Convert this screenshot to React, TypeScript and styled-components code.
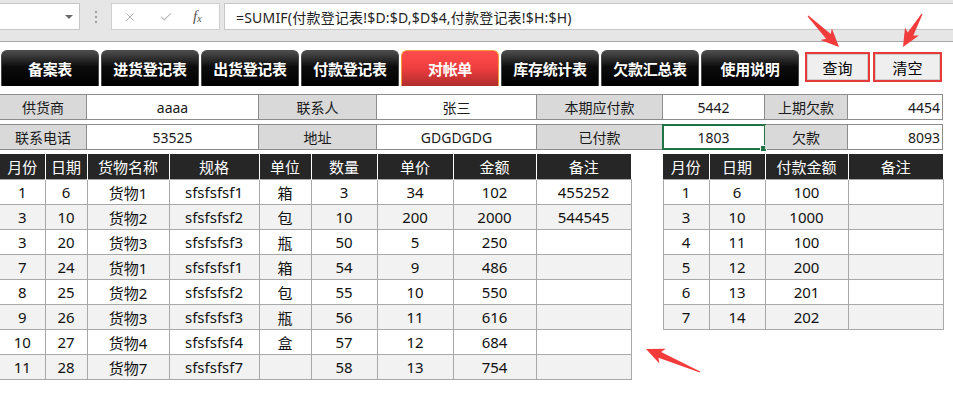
import React from "react";
import styled, { createGlobalStyle, css } from "styled-components";
import { X, Check } from "lucide-react";

const GlobalStyle = createGlobalStyle`
  html, body {
    margin: 0;
    padding: 0;
    background: #fff;
  }
  body {
    font-family: "Noto Sans", "Noto Sans CJK SC", sans-serif;
    color: #111;
  }
`;

const Page = styled.div`
  position: relative;
  width: 953px;
  height: 393px;
  overflow: hidden;
  background: #fff;
`;

/* ---------- formula bar ---------- */

const FormulaBar = styled.div`
  display: flex;
  align-items: flex-start;
  height: 42px;
  box-sizing: border-box;
  padding-top: 3px;
  background: #e6e6e6;
  border-bottom: 1px solid #a8a8a8;
`;

const NameBox = styled.div`
  position: relative;
  width: 83px;
  height: 27px;
  margin-left: -3px;
  box-sizing: border-box;
  background: #fff;
  border: 1px solid #c6c6c6;
  &::after {
    content: "";
    position: absolute;
    right: 6px;
    top: 11px;
    border-left: 4px solid transparent;
    border-right: 4px solid transparent;
    border-top: 4px solid #6a6a6a;
  }
`;

const Grip = styled.div`
  width: 31px;
  height: 27px;
  display: flex;
  align-items: center;
  justify-content: center;
`;

const FxGroup = styled.div`
  display: flex;
  align-items: center;
  width: 109px;
  height: 27px;
  box-sizing: border-box;
  background: #fff;
  border: 1px solid #d0d0d0;
  padding-left: 11px;
  gap: 22px;
  color: #b0b0b0;
`;

const FxLabel = styled.span`
  font-family: "Liberation Serif", serif;
  font-style: italic;
  font-size: 15px;
  color: #555;
  margin-left: -2px;
  sub {
    font-size: 10px;
    vertical-align: -1px;
  }
`;

const FormulaInput = styled.div`
  flex: 1;
  height: 27px;
  margin-left: 4px;
  margin-right: -4px;
  box-sizing: border-box;
  background: #fff;
  border: 1px solid #c6c6c6;
  padding-left: 11px;
  display: flex;
  align-items: center;
  font-size: 14px;
  letter-spacing: 0.2px;
  color: #222;
  white-space: nowrap;
`;

/* ---------- sheet tabs ---------- */

const TabRow = styled.div`
  display: flex;
  align-items: flex-start;
  height: 52px;
  box-sizing: border-box;
  padding: 8px 0 0 1px;
  gap: 2px;
`;

const Tab = styled.div<{ $active?: boolean }>`
  width: 98px;
  height: 36px;
  box-sizing: border-box;
  display: flex;
  align-items: center;
  justify-content: center;
  border-radius: 6px 6px 0 0;
  border: 1px solid ${(p) => (p.$active ? "#f59a3a" : "#4a4a4a")};
  border-bottom: none;
  background: ${(p) =>
    p.$active
      ? "linear-gradient(#ff4c4c 0%, #f23f3f 45%, #b02c2c 100%)"
      : "linear-gradient(#4d4d4d 0%, #0c0c0c 45%, #000 100%)"};
  color: #fff;
  font-family: "Noto Sans CJK SC", sans-serif;
  font-weight: 700;
  font-size: 15px;
  letter-spacing: -0.3px;
`;

const ActionGroup = styled.div`
  display: flex;
  gap: 3px;
  margin-left: 4px;
  margin-top: 2px;
`;

const ActionButton = styled.div<{ $w: number }>`
  width: ${(p) => p.$w}px;
  height: 30px;
  box-sizing: border-box;
  display: flex;
  align-items: center;
  justify-content: center;
  border: 2px solid #e63b3b;
  background: #efefef;
  box-shadow: inset 0 0 0 1px #cfcfcf;
  font-family: "Noto Sans CJK SC", sans-serif;
  font-size: 15px;
  color: #000;
`;

/* ---------- info block ---------- */

const InfoRow = styled.div`
  display: grid;
  grid-template-columns: 87px 172px 118px 160px 126px 102px 83px 95px;
  width: 943px;
  height: 26px;
  box-sizing: border-box;
  border-top: 1px solid #8c8c8c;
  border-bottom: 1px solid #8c8c8c;
  & + & {
    margin-top: 4px;
  }
`;

const InfoCell = styled.div<{ $label?: boolean; $right?: boolean; $selected?: boolean }>`
  position: relative;
  display: flex;
  align-items: center;
  justify-content: ${(p) => (p.$right ? "flex-end" : "center")};
  padding-right: ${(p) => (p.$right ? "2px" : "0")};
  border-right: 1px solid #8c8c8c;
  background: ${(p) => (p.$label ? "#d9d9d9" : "#fff")};
  font-family: "Noto Sans", "Noto Sans CJK SC", sans-serif;
  font-size: 14px;
  color: #1a1a1a;
  ${(p) =>
    p.$selected &&
    css`
      outline: 2px solid #217346;
      outline-offset: -1px;
      &::after {
        content: "";
        position: absolute;
        right: -3px;
        bottom: -3px;
        width: 5px;
        height: 5px;
        background: #217346;
        border: 1px solid #fff;
      }
    `}
`;

/* ---------- tables ---------- */

const TablesRow = styled.div`
  display: flex;
  align-items: flex-start;
  gap: 31px;
  margin-top: 4px;
`;

const DataTable = styled.table<{ $width: number; $flush?: boolean }>`
  width: ${(p) => p.$width}px;
  border-collapse: collapse;
  table-layout: fixed;
  font-family: "Noto Sans", "Noto Sans CJK SC", sans-serif;
  font-size: 15px;
  ${(p) =>
    p.$flush &&
    css`
      td:first-child {
        border-left: none;
      }
    `}
`;

const HeadCell = styled.th`
  height: 25px;
  padding: 0;
  background: #262626;
  color: #fff;
  font-weight: 400;
  border-left: 1px solid #fff;
  &:first-child {
    border-left: none;
  }
`;

const BodyCell = styled.td<{ $alt?: boolean }>`
  height: 24px;
  padding: 0;
  text-align: center;
  border: 1px solid #a8a8a8;
  background: ${(p) => (p.$alt ? "#f2f2f2" : "#fff")};
  color: #111;
`;

const Overlay = styled.svg`
  position: absolute;
  left: 0;
  top: 0;
  pointer-events: none;
`;

/* ---------- data ---------- */

const tabs = ["备案表", "进货登记表", "出货登记表", "付款登记表", "对帐单", "库存统计表", "欠款汇总表", "使用说明"];

const goodsCols = [45, 42, 82, 90, 52, 66, 76, 83, 95];
const goodsHead = ["月份", "日期", "货物名称", "规格", "单位", "数量", "单价", "金额", "备注"];
const goods = [
  ["1", "6", "货物1", "sfsfsfsf1", "箱", "3", "34", "102", "455252"],
  ["3", "10", "货物2", "sfsfsfsf2", "包", "10", "200", "2000", "544545"],
  ["3", "20", "货物3", "sfsfsfsf3", "瓶", "50", "5", "250", ""],
  ["7", "24", "货物1", "sfsfsfsf1", "箱", "54", "9", "486", ""],
  ["8", "25", "货物2", "sfsfsfsf2", "包", "55", "10", "550", ""],
  ["9", "26", "货物3", "sfsfsfsf3", "瓶", "56", "11", "616", ""],
  ["10", "27", "货物4", "sfsfsfsf4", "盒", "57", "12", "684", ""],
  ["11", "28", "货物7", "sfsfsfsf7", "", "58", "13", "754", ""],
];

const payCols = [46, 56, 83, 95];
const payHead = ["月份", "日期", "付款金额", "备注"];
const payments = [
  ["1", "6", "100", ""],
  ["3", "10", "1000", ""],
  ["4", "11", "100", ""],
  ["5", "12", "200", ""],
  ["6", "13", "201", ""],
  ["7", "14", "202", ""],
];

// arrow drawn as a tapered wedge with swept barbs, tail -> tip
function arrowPoints(x1: number, y1: number, x2: number, y2: number) {
  const dx = x2 - x1;
  const dy = y2 - y1;
  const len = Math.hypot(dx, dy);
  const ux = dx / len;
  const uy = dy / len;
  const px = -uy;
  const py = ux;
  const h = 15;
  const pts: [number, number][] = [
    [0, -0.6],
    [len - h, -3.2],
    [len - h - 3, -8],
    [len, 0],
    [len - h - 3, 8],
    [len - h, 3.2],
    [0, 0.6],
  ];
  return pts.map(([a, b]) => `${(x1 + ux * a + px * b).toFixed(1)},${(y1 + uy * a + py * b).toFixed(1)}`).join(" ");
}

const arrows = [
  [808, 16, 839, 47],
  [922, 14, 903, 47],
  [700, 372, 646, 349],
];

const Table: React.FC<{ cols: number[]; head: string[]; rows: string[][]; flush?: boolean }> = ({
  cols,
  head,
  rows,
  flush,
}) => (
  <DataTable $width={cols.reduce((a, b) => a + b, 0)} $flush={flush}>
    <colgroup>
      {cols.map((w, i) => (
        <col key={i} style={{ width: w }} />
      ))}
    </colgroup>
    <thead>
      <tr>
        {head.map((h) => (
          <HeadCell key={h}>{h}</HeadCell>
        ))}
      </tr>
    </thead>
    <tbody>
      {rows.map((r, i) => (
        <tr key={i}>
          {r.map((c, j) => (
            <BodyCell key={j} $alt={i % 2 === 1}>
              {c}
            </BodyCell>
          ))}
        </tr>
      ))}
    </tbody>
  </DataTable>
);

export default function App() {
  return (
    <Page>
      <GlobalStyle />
      <FormulaBar>
        <NameBox />
        <Grip>
          <svg width="4" height="14" viewBox="0 0 4 14">
            <circle cx="2" cy="2" r="1.2" fill="#a0a0a0" />
            <circle cx="2" cy="7" r="1.2" fill="#a0a0a0" />
            <circle cx="2" cy="12" r="1.2" fill="#a0a0a0" />
          </svg>
        </Grip>
        <FxGroup>
          <X size={14} strokeWidth={1.6} />
          <Check size={14} strokeWidth={1.8} />
          <FxLabel>
            f<sub>x</sub>
          </FxLabel>
        </FxGroup>
        <FormulaInput>=SUMIF(付款登记表!$D:$D,$D$4,付款登记表!$H:$H)</FormulaInput>
      </FormulaBar>

      <TabRow>
        {tabs.map((t) => (
          <Tab key={t} $active={t === "对帐单"}>
            {t}
          </Tab>
        ))}
        <ActionGroup>
          <ActionButton $w={65}>查询</ActionButton>
          <ActionButton $w={69}>清空</ActionButton>
        </ActionGroup>
      </TabRow>

      <InfoRow>
        <InfoCell $label>供货商</InfoCell>
        <InfoCell>aaaa</InfoCell>
        <InfoCell $label>联系人</InfoCell>
        <InfoCell>张三</InfoCell>
        <InfoCell $label>本期应付款</InfoCell>
        <InfoCell>5442</InfoCell>
        <InfoCell $label>上期欠款</InfoCell>
        <InfoCell $right>4454</InfoCell>
      </InfoRow>
      <InfoRow>
        <InfoCell $label>联系电话</InfoCell>
        <InfoCell>53525</InfoCell>
        <InfoCell $label>地址</InfoCell>
        <InfoCell>GDGDGDG</InfoCell>
        <InfoCell $label>已付款</InfoCell>
        <InfoCell $selected>1803</InfoCell>
        <InfoCell $label>欠款</InfoCell>
        <InfoCell $right>8093</InfoCell>
      </InfoRow>

      <TablesRow>
        <Table cols={goodsCols} head={goodsHead} rows={goods} flush />
        <Table cols={payCols} head={payHead} rows={payments} />
      </TablesRow>

      <Overlay width={953} height={393}>
        {arrows.map(([a, b, c, d], i) => (
          <polygon key={i} points={arrowPoints(a, b, c, d)} fill="#f23b3b" />
        ))}
      </Overlay>
    </Page>
  );
}
